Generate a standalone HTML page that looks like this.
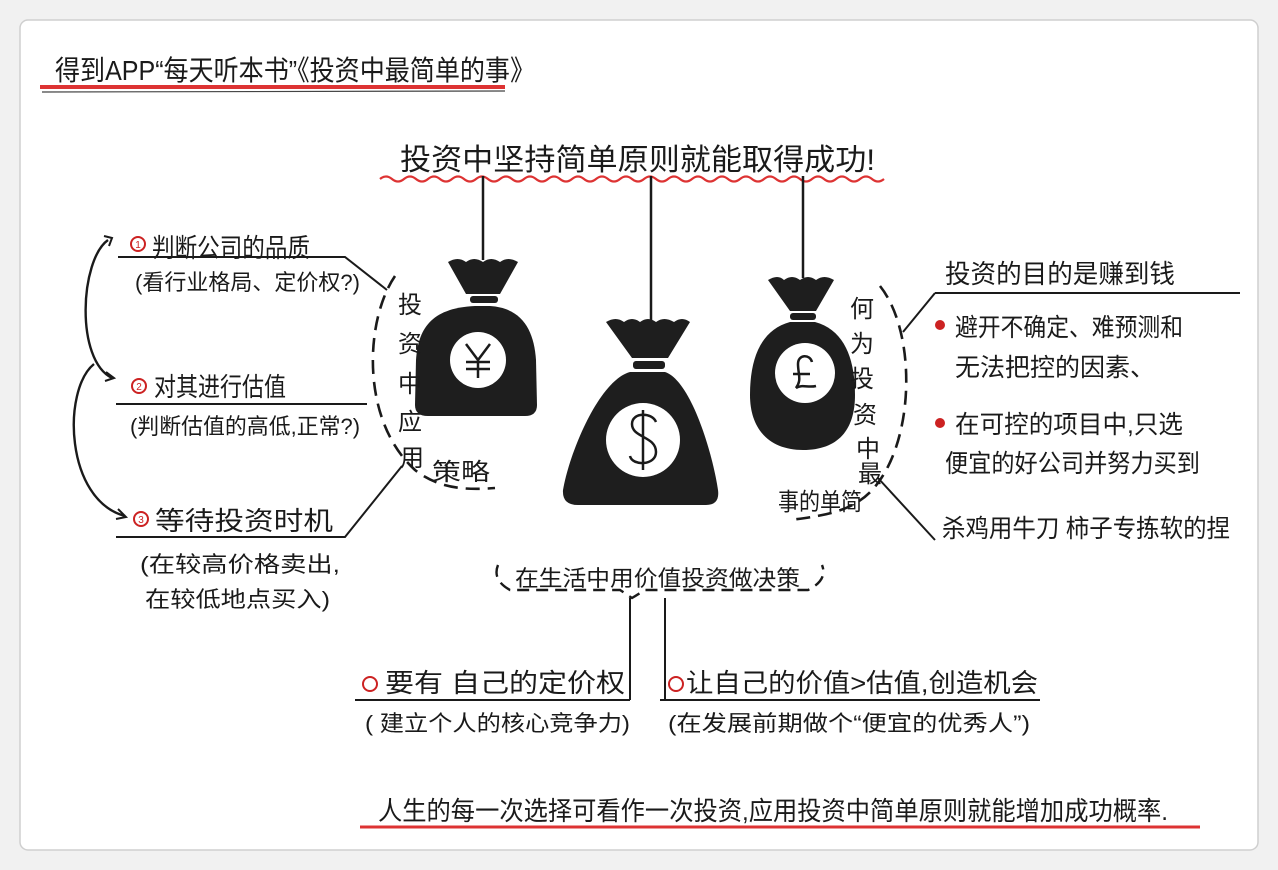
<!DOCTYPE html>
<html><head><meta charset="utf-8"><style>
html,body{margin:0;padding:0;background:#f1f1f1;}
svg{display:block}
text{font-family:"Liberation Sans","Noto Sans CJK SC",sans-serif;fill:#1a1a1a;}
</style></head><body>
<svg width="1278" height="870" viewBox="0 0 1278 870" xmlns="http://www.w3.org/2000/svg">
<rect x="20" y="20" width="1238" height="830" rx="8" fill="#fff" stroke="#cfcfcf" stroke-width="1.5"/>
<text x="55" y="80" font-size="28" textLength="480" lengthAdjust="spacingAndGlyphs">得到APP“每天听本书”《投资中最简单的事》</text>
<path d="M40 87 L505 87" stroke="#d33" stroke-width="4"/>
<path d="M42 92 L505 91" stroke="#444" stroke-width="1.2"/>
<text x="400" y="170" font-size="30" textLength="475" lengthAdjust="spacingAndGlyphs">投资中坚持简单原则就能取得成功!</text>
<path d="M380 179 q6 -5 12 0 t12 0 t12 0 t12 0 t12 0 t12 0 t12 0 t12 0 t12 0 t12 0 t12 0 t12 0 t12 0 t12 0 t12 0 t12 0 t12 0 t12 0 t12 0 t12 0 t12 0 t12 0 t12 0 t12 0 t12 0 t12 0 t12 0 t12 0 t12 0 t12 0 t12 0 t12 0 t12 0 t12 0 t12 0 t12 0 t12 0 t12 0 t12 0 t12 0 t12 0 t12 0" fill="none" stroke="#d33" stroke-width="2.2"/>
<g stroke="#1a1a1a" stroke-width="2.5" fill="none">
<path d="M483 176 V260"/><path d="M651 176 V320"/><path d="M803 176 V278"/>
</g>
<g fill="#1e1e1e">
<path d="M448 262 q10 -6 18 0 q8 -6 17 0 q8 -6 17 0 q8 -6 18 0 L500 294 L466 294 Z"/>
<rect x="470" y="296" width="28" height="7" rx="3"/>
<path d="M475 306 C430 308 418 330 416 360 L415 405 Q415 416 428 416 L525 416 Q537 416 537 405 L536 360 C534 330 522 308 490 306 Z"/>
<path d="M606 322 q10 -6 18 0 q8 -6 16 0 q8 -6 16 0 q8 -6 18 0 q8 -6 16 0 L668 358 L632 358 Z"/>
<rect x="633" y="361" width="32" height="8" rx="3"/>
<path d="M630 372 C600 380 570 450 563 490 Q562 505 578 505 L706 505 Q720 505 718 490 C712 450 690 380 665 372 Z"/>
<path d="M768 280 q10 -6 16 0 q8 -6 16 0 q8 -6 16 0 q8 -6 18 0 L816 311 L790 311 Z"/>
<rect x="790" y="313" width="26" height="7" rx="3"/>
<path d="M790 322 C760 330 750 360 750 395 C750 430 770 450 803 450 C838 450 855 430 855 395 C855 360 845 330 815 322 Z"/>
</g>
<circle cx="478" cy="360" r="28" fill="#fff"/>
<circle cx="643" cy="440" r="37" fill="#fff"/>
<circle cx="805" cy="373" r="30" fill="#fff"/>
<g stroke="#1a1a1a" stroke-width="2.5" fill="none">
<path d="M466 344 L478 360 L490 344 M478 360 V378 M466 362 H490 M466 369 H490"/>
<path d="M643 410 V470 M656 422 C652 412 632 412 632 424 C632 438 656 436 656 452 C656 466 632 466 630 456"/>
<path d="M812 362 C810 354 798 354 798 364 C798 374 802 380 796 388 C802 384 808 388 816 386 M793 374 H810"/>
</g>
<g stroke="#1a1a1a" stroke-width="2" fill="none">
<path d="M118 257 H345 L387 290"/>
<path d="M116 404 H367"/>
<path d="M116 537 H345 L402 466"/>
<path d="M395 276 C365 320 360 420 415 470 C440 490 470 490 495 488" stroke-dasharray="14 8" stroke-width="2.6"/>
<path d="M108 240 C80 260 75 360 112 378" stroke-width="2.4"/>
<path d="M94 364 C62 390 65 500 125 516" stroke-width="2.4"/>
<path d="M104 236 l8 2 l-3 8" />
<path d="M106 372 l8 6 l-9 3"/>
<path d="M118 509 l8 8 l-10 2"/>
<path d="M935 293 H1240 M935 293 L903 332"/>
<path d="M878 478 L935 540"/>
<path d="M880 286 C915 330 915 430 880 480 C860 510 830 515 790 520" stroke-dasharray="14 8" stroke-width="2.6"/>
<path d="M498 565 Q492 580 510 590 H620 L632 598 L645 590 H808 Q828 580 822 565" stroke-dasharray="12 7" stroke-width="2.4"/>
<path d="M630 598 V700 M665 598 V700"/>
<path d="M355 700 H630 M660 700 H1040"/>
</g>
<text x="152" y="257" font-size="26" textLength="158" lengthAdjust="spacingAndGlyphs">判断公司的品质</text>
<text x="135" y="290" font-size="22" textLength="225" lengthAdjust="spacingAndGlyphs">(看行业格局、定价权?)</text>
<text x="154" y="396" font-size="26" textLength="132" lengthAdjust="spacingAndGlyphs">对其进行估值</text>
<text x="130" y="434" font-size="22" textLength="230" lengthAdjust="spacingAndGlyphs">(判断估值的高低,正常?)</text>
<text x="155" y="530" font-size="26" textLength="178" lengthAdjust="spacingAndGlyphs">等待投资时机</text>
<text x="140" y="572" font-size="22" textLength="200" lengthAdjust="spacingAndGlyphs">(在较高价格卖出,</text>
<text x="145" y="607" font-size="22" textLength="185" lengthAdjust="spacingAndGlyphs">在较低地点买入)</text>
<g fill="none" stroke="#c22" stroke-width="2"><circle cx="138" cy="244" r="7"/><circle cx="139" cy="386" r="7"/><circle cx="141" cy="519" r="7"/></g>
<g font-size="10" text-anchor="middle"><text x="138" y="248" style="fill:#c22">1</text><text x="139" y="390" style="fill:#c22">2</text><text x="141" y="523" style="fill:#c22">3</text></g>
<g font-size="24" text-anchor="middle">
<text x="410" y="313">投</text><text x="410" y="352">资</text><text x="410" y="392">中</text><text x="410" y="430">应</text><text x="412" y="466">用</text>
</g>
<text x="432" y="480" font-size="24" textLength="58" lengthAdjust="spacingAndGlyphs">策略</text>
<text x="945" y="283" font-size="26" textLength="230" lengthAdjust="spacingAndGlyphs">投资的目的是赚到钱</text>
<circle cx="940" cy="325" r="5" fill="#c22"/>
<text x="955" y="336" font-size="25" textLength="228" lengthAdjust="spacingAndGlyphs">避开不确定、难预测和</text>
<text x="955" y="376" font-size="25" textLength="200" lengthAdjust="spacingAndGlyphs">无法把控的因素、</text>
<circle cx="940" cy="423" r="5" fill="#c22"/>
<text x="955" y="433" font-size="25" textLength="228" lengthAdjust="spacingAndGlyphs">在可控的项目中,只选</text>
<text x="945" y="472" font-size="25" textLength="255" lengthAdjust="spacingAndGlyphs">便宜的好公司并努力买到</text>
<text x="942" y="537" font-size="25" textLength="288" lengthAdjust="spacingAndGlyphs">杀鸡用牛刀 柿子专拣软的捏</text>
<g font-size="24" text-anchor="middle">
<text x="862" y="317">何</text><text x="862" y="352">为</text><text x="862" y="387">投</text><text x="865" y="423">资</text><text x="868" y="457">中</text><text x="870" y="482">最</text>
</g>
<text x="778" y="510" font-size="24" textLength="84" lengthAdjust="spacingAndGlyphs">事的单简</text>
<text x="515" y="586" font-size="22" textLength="285" lengthAdjust="spacingAndGlyphs">在生活中用价值投资做决策</text>
<circle cx="370" cy="684" r="7" fill="none" stroke="#c22" stroke-width="2"/>
<text x="385" y="692" font-size="26" textLength="240" lengthAdjust="spacingAndGlyphs">要有 自己的定价权</text>
<text x="365" y="731" font-size="22" textLength="265" lengthAdjust="spacingAndGlyphs">( 建立个人的核心竞争力)</text>
<circle cx="676" cy="684" r="7" fill="none" stroke="#c22" stroke-width="2"/>
<text x="686" y="692" font-size="26" textLength="352" lengthAdjust="spacingAndGlyphs">让自己的价值&gt;估值,创造机会</text>
<text x="668" y="731" font-size="22" textLength="362" lengthAdjust="spacingAndGlyphs">(在发展前期做个“便宜的优秀人”)</text>
<text x="378" y="820" font-size="26" textLength="790" lengthAdjust="spacingAndGlyphs">人生的每一次选择可看作一次投资,应用投资中简单原则就能增加成功概率.</text>
<path d="M360 827 H1200" stroke="#d33" stroke-width="3"/>
</svg>
</body></html>
